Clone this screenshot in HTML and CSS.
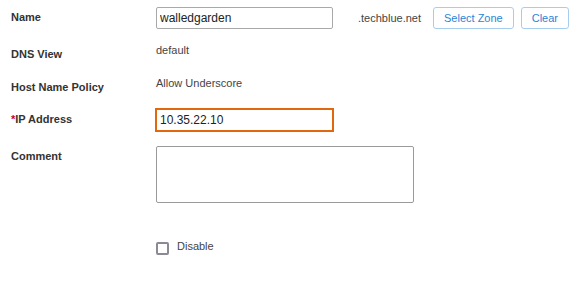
FILE: index.html
```html
<!DOCTYPE html>
<html>
<head>
    <meta charset="UTF-8">
    <link rel="stylesheet" href="styles.css">
</head>
<body>
    <div class="form">
        <div class="row row-name">
            <label class="label">Name</label>
            <div class="value">
                <input type="text" class="field" value="walledgarden">
                <span class="suffix">.techblue.net</span>
                <button class="btn">Select Zone</button>
                <button class="btn">Clear</button>
            </div>
        </div>

        <div class="row row-text">
            <label class="label">DNS View</label>
            <div class="value text">default</div>
        </div>

        <div class="row row-text">
            <label class="label">Host Name Policy</label>
            <div class="value text">Allow Underscore</div>
        </div>

        <div class="row row-ip">
            <label class="label"><span class="req">*</span>IP Address</label>
            <div class="value">
                <input type="text" class="field focused" value="10.35.22.10">
            </div>
        </div>

        <div class="row row-comment">
            <label class="label">Comment</label>
            <div class="value">
                <textarea class="comment"></textarea>
            </div>
        </div>

        <div class="row row-check">
            <div></div>
            <label class="check">
                <span class="box"></span>
                <span class="check-text">Disable</span>
            </label>
        </div>
    </div>
</body>
</html>
```

FILE: styles.css
```css
/* base */
body {
    margin: 0;
    background: #fff;
    font-family: "Liberation Sans", Arial, sans-serif;
    color: #333;
}

.form {
    padding: 7px 0 0 11px;
}

/* rows */
.row {
    display: grid;
    grid-template-columns: 145px 1fr;
    align-items: start;
}

.row-name { height: 37px; }
.row-text { height: 33px; }
.row-text + .row-text { height: 32px; }
.row-ip { height: 37px; }
.row-comment { height: 95px; }

.label {
    font-size: 11px;
    font-weight: bold;
    line-height: 13px;
    color: #333;
    padding-top: 4px;
}

.req {
    color: #d0021b;
}

.value {
    display: flex;
    align-items: center;
}

.value.text {
    font-size: 11px;
    line-height: 13px;
    color: #444;
}

/* inputs */
.field {
    box-sizing: border-box;
    width: 177px;
    height: 22px;
    margin: 0;
    padding: 0 3px;
    border: 1px solid #a9a9a9;
    border-radius: 2px;
    font-family: "Liberation Sans", Arial, sans-serif;
    font-size: 12px;
    color: #222;
    background: #fff;
}

.field.focused {
    border-color: #e0690f;
    outline: 1px solid #e0690f;
    border-radius: 0;
}

.suffix {
    font-size: 11px;
    color: #444;
    margin: 0 12px 0 25px;
}

.btn {
    box-sizing: border-box;
    height: 22px;
    padding: 0 10px;
    margin-right: 7px;
    border: 1px solid #a7cdee;
    border-radius: 3px;
    background: #fff;
    color: #2a85d6;
    font-family: "Liberation Sans", Arial, sans-serif;
    font-size: 11px;
}

.comment {
    box-sizing: border-box;
    width: 258px;
    height: 57px;
    margin: 0;
    border: 1px solid #9a9a9a;
    border-radius: 2px;
    resize: none;
    display: block;
}

/* checkbox */
.check {
    display: flex;
    align-items: flex-start;
    gap: 8px;
    font-size: 11px;
    line-height: 13px;
    color: #444;
}

.check .box {
    box-sizing: border-box;
    width: 13px;
    height: 13px;
    margin-top: 1px;
    border: 2px solid #8a8a94;
    border-radius: 2px;
}

.check-text {
    margin-top: -1px;
}
```
